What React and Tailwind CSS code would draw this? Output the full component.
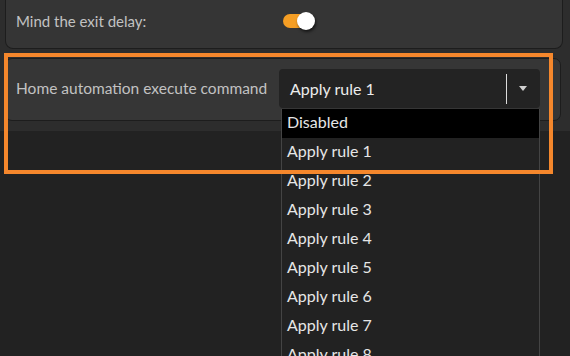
const rules = ['Disabled', 'Apply rule 1', 'Apply rule 2', 'Apply rule 3', 'Apply rule 4', 'Apply rule 5', 'Apply rule 6', 'Apply rule 7', 'Apply rule 8', 'Apply rule 9'];

function Toggle() {
  return (
    <div className="relative w-[31px] h-[18px] flex items-center">
      <div className="w-[30px] h-[14px] rounded-full bg-[#f59e24]" />
      <div className="absolute right-[-1px] top-[0px] w-[18px] h-[18px] rounded-full bg-white shadow-[1px_2px_3px_rgba(0,0,0,0.6)]" />
    </div>
  );
}

export default function App() {
  return (
    <div className="relative w-[570px] h-[356px] overflow-hidden bg-[#222222] font-['Lato',sans-serif]">
      {/* Settings panel */}
      <div className="bg-[#2d2d2d] pb-[10px]">
        <div className="ml-[5px] mr-[7px] h-[49px] bg-[#353535] border border-t-0 border-[#1d1d1d] rounded-b-[8px] flex items-start">
          <div className="flex items-center h-[42px] pl-[10px]">
            <span className="w-[267px] text-[15px] text-[#c2c2c2]">Mind the exit delay:</span>
            <Toggle />
          </div>
        </div>

        <div className="mt-[9px] ml-[5px] mr-[9px] h-[63px] bg-[#363636] border border-[#1d1d1d] rounded-[7px] flex items-center pl-[10px] pb-[2px]">
          <span className="w-[263px] text-[15.5px] text-[#c2c2c2]">Home automation execute command</span>
          <div className="relative">
            <div className="w-[261px] h-[39px] bg-[#232323] rounded-[4px] flex items-center pl-[11px] pr-[13px]">
              <span className="flex-1 text-[16px] text-[#ececec]">Apply rule 1</span>
              <div className="w-px h-[30px] bg-[#dcdcdc]" />
              <svg className="ml-[12px]" width="8" height="5" viewBox="0 0 8 5">
                <path d="M0 0h8L4 5z" fill="#d0d0d0" />
              </svg>
            </div>
            {/* Open options list */}
            <ul className="absolute left-[2px] top-[40px] w-[259px] z-10 bg-[#222222] border-x border-[#444444]">
              {rules.map((r, i) => (
                <li key={r}
                  className={`h-[29px] flex items-center pl-[5px] pb-[3px] text-[16px] text-[#e6e6e6]
                    ${i === 0 ? 'bg-black' : ''}`}>
                  {r}
                </li>
              ))}
            </ul>
          </div>
        </div>
      </div>

      {/* Highlight annotation */}
      <div className="absolute left-[4px] top-[53px] w-[549px] h-[121px] border-4 border-[#f5872c] z-20 pointer-events-none" />
    </div>
  );
}
